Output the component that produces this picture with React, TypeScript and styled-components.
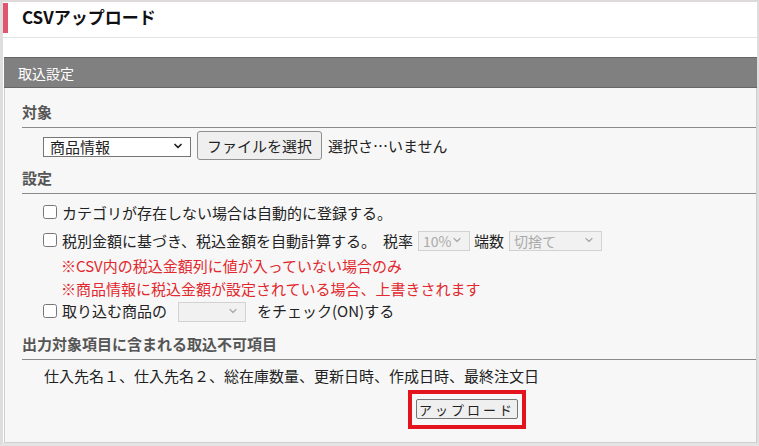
import React from 'react'
import styled, { createGlobalStyle } from 'styled-components'
import { ChevronDown } from 'lucide-react'

const GlobalStyle = createGlobalStyle`
  html, body {
    margin: 0;
    padding: 0;
    background: #ffffff;
  }
  body {
    font-family: "Noto Sans CJK JP", "Noto Sans", sans-serif;
    color: #222;
  }
`

const Frame = styled.div`
  width: 759px;
  height: 446px;
  box-sizing: border-box;
  border-top: 2px solid #dedada;
  border-left: 3px solid #dedede;
  border-right: 2px solid #dedede;
  border-bottom: 3px solid #e4e4e4;
  background: #fff;
  display: flex;
  flex-direction: column;
`

const TitleBar = styled.div`
  height: 36px;
  border-bottom: 1px solid #e4e4e4;
  display: flex;
  align-items: flex-start;
  padding-top: 1px;
  box-sizing: border-box;
`

const Accent = styled.div`
  width: 5px;
  height: 30px;
  background: #e0566e;
`

const Title = styled.h1`
  margin: 0 0 0 14px;
  font-size: 17px;
  font-weight: bold;
  line-height: 28px;
  color: #111;
`

const Panel = styled.div`
  margin: 19px 0 0 1px;
  flex: 1;
  display: flex;
  flex-direction: column;
`

const PanelHeader = styled.div`
  height: 31px;
  box-sizing: border-box;
  background: #808080;
  border-top: 1px solid #666;
  border-bottom: 1px solid #666;
  color: #fff;
  font-size: 14px;
  line-height: 30px;
  padding-left: 14px;
`

const PanelBody = styled.div`
  flex: 1;
  background: #f7f7f7;
  border: 1px solid #cfcfcf;
  border-top: none;
  padding: 12px 0 0 17px;
  font-size: 15px;
`

const SectionTitle = styled.div<{ gap?: number }>`
  font-weight: bold;
  color: #555;
  font-size: 15px;
  line-height: 24px;
  padding-bottom: 3px;
  border-bottom: 1px solid #8a8a8a;
  margin-top: ${(p) => p.gap ?? 0}px;
`

const Row = styled.div<{ indent?: number; h?: number; top?: number }>`
  display: flex;
  align-items: center;
  height: ${(p) => p.h ?? 23}px;
  margin-top: ${(p) => p.top ?? 0}px;
  padding-left: ${(p) => p.indent ?? 21}px;
  white-space: nowrap;
`

const SelectWrap = styled.div<{ w: number; disabled?: boolean }>`
  position: relative;
  width: ${(p) => p.w}px;
  height: 20px;
  color: ${(p) => (p.disabled ? '#aaa' : '#222')};
  svg {
    position: absolute;
    right: 7px;
    top: 4px;
    pointer-events: none;
  }
`

const Select = styled.select<{ disabled?: boolean }>`
  appearance: none;
  width: 100%;
  height: 100%;
  box-sizing: border-box;
  margin: 0;
  padding: 0 0 0 ${(p) => (p.disabled ? 4 : 6)}px;
  font-family: inherit;
  font-size: ${(p) => (p.disabled ? 14 : 15)}px;
  line-height: 18px;
  background: ${(p) => (p.disabled ? '#f1f1f1' : '#fff')};
  border: 1px solid ${(p) => (p.disabled ? '#d2d2d2' : '#767676')};
  border-radius: 0;
  color: inherit;
  opacity: 1;
`

const FileButton = styled.button`
  margin-left: 6px;
  width: 125px;
  height: 29px;
  box-sizing: border-box;
  background: #efefef;
  border: 1px solid #8f8f8f;
  border-radius: 3px;
  font-family: inherit;
  font-size: 15px;
  color: #222;
  padding: 0;
`

const FileState = styled.span`
  margin-left: 6px;
`

const Check = styled.input.attrs({ type: 'checkbox' })`
  width: 14px;
  height: 14px;
  margin: 0 5px 0 0;
  accent-color: #555;
`

const Label = styled.span<{ ml?: number; mr?: number }>`
  margin-left: ${(p) => p.ml ?? 0}px;
  margin-right: ${(p) => p.mr ?? 5}px;
`

const Note = styled.div<{ top?: number }>`
  color: #e2282e;
  padding-left: 39px;
  line-height: 23px;
  margin-top: ${(p) => p.top ?? 0}px;
  white-space: nowrap;
`

const Items = styled.div`
  padding: 5px 0 0 22px;
  line-height: 22px;
`

const UploadArea = styled.div`
  display: flex;
  padding: 3px 0 0 386px;
`

const Highlight = styled.div`
  border: 4px solid #e3141d;
  padding: 4px 4px 6px 4px;
  width: 102px;
`

const UploadButton = styled.button`
  width: 102px;
  height: 20px;
  box-sizing: border-box;
  padding: 0;
  background: #efefef;
  border: 1px solid #767676;
  border-radius: 2px;
  font-family: inherit;
  font-size: 13px;
  letter-spacing: 3px;
  color: #222;
`

const DropSelect: React.FC<{ w: number; value: string; disabled?: boolean }> = ({ w, value, disabled }) => (
  <SelectWrap w={w} disabled={disabled}>
    <Select disabled={disabled} defaultValue={value}>
      <option value={value}>{value}</option>
    </Select>
    <ChevronDown size={12} strokeWidth={disabled ? 2.5 : 3.5} />
  </SelectWrap>
)

const App: React.FC = () => {
  return (
    <>
      <GlobalStyle />
      <Frame>
        <TitleBar>
          <Accent />
          <Title>CSVアップロード</Title>
        </TitleBar>
        <Panel>
          <PanelHeader>取込設定</PanelHeader>
          <PanelBody>
            <SectionTitle>対象</SectionTitle>
            <Row h={35}>
              <DropSelect w={148} value="商品情報" />
              <FileButton>ファイルを選択</FileButton>
              <FileState>選択さ…いません</FileState>
            </Row>
            <SectionTitle gap={3}>設定</SectionTitle>
            <Row h={22} top={7}>
              <Check />
              <Label>カテゴリが存在しない場合は自動的に登録する。</Label>
            </Row>
            <Row h={22} top={6}>
              <Check />
              <Label>税別金額に基づき、税込金額を自動計算する。</Label>
              <Label ml={2}>税率</Label>
              <DropSelect w={52} value="10%" disabled />
              <Label ml={4}>端数</Label>
              <DropSelect w={93} value="切捨て" disabled />
            </Row>
            <Note top={3}>※CSV内の税込金額列に値が入っていない場合のみ</Note>
            <Note>※商品情報に税込金額が設定されている場合、上書きされます</Note>
            <Row h={21}>
              <Check />
              <Label mr={11}>取り込む商品の</Label>
              <DropSelect w={68} value="" disabled />
              <Label ml={11}>をチェック(ON)する</Label>
            </Row>
            <SectionTitle gap={11}>出力対象項目に含まれる取込不可項目</SectionTitle>
            <Items>仕入先名１、仕入先名２、総在庫数量、更新日時、作成日時、最終注文日</Items>
            <UploadArea>
              <Highlight>
                <UploadButton>アップロード</UploadButton>
              </Highlight>
            </UploadArea>
          </PanelBody>
        </Panel>
      </Frame>
    </>
  )
}

export default App
